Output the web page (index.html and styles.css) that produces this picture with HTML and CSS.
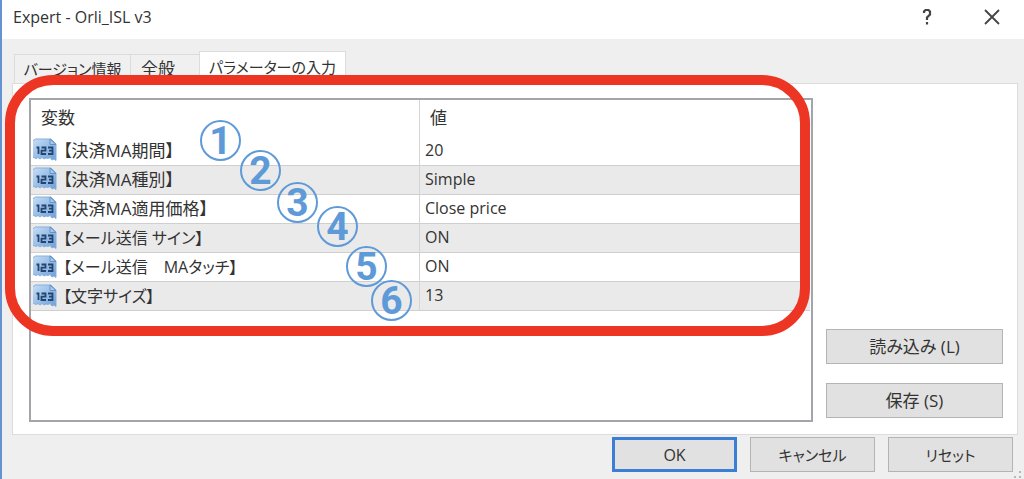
FILE: index.html
```html
<!DOCTYPE html>
<html lang="ja">
<head>
    <meta charset="UTF-8">
    <meta name="viewport" content="width=device-width, initial-scale=1.0">
    <title>Expert - Orli_ISL v3</title>
    <link rel="stylesheet" href="styles.css">
</head>
<body>
    <!-- shared icon for numeric parameters -->
    <svg class="defs" width="0" height="0" aria-hidden="true">
        <defs>
            <linearGradient id="paper" x1="0" y1="0" x2="1" y2="1">
                <stop offset="0" stop-color="#c6def6"/>
                <stop offset="1" stop-color="#6d9fd8"/>
            </linearGradient>
            <symbol id="icon-num" viewBox="0 0 24 24">
                <path d="M2.5 1H18l5 5V22.500l-2-1.500-2 1-2-2.500-2 1-2-.5-2 1-2-1.500-2 1.500-2-1.500-2 1-2-1-1.500.5V3z" fill="url(#paper)" stroke="#86afdd"/>
                <path d="M17 1v5.500h6z" fill="#a9c9ec" stroke="#6592c6"/>
                <path d="M3.500 9.500h2v6.500M8.500 9.500h4v3.200h-4v3.300h4.500M15 9.500h4.500v6.500H15M16 12.700h3.500" fill="none" stroke="#234570" stroke-width="1.800"/>
            </symbol>
        </defs>
    </svg>

    <div class="dialog">
        <header class="titlebar">
            <h1>Expert - Orli_ISL v3</h1>
            <button class="help" type="button" aria-label="ヘルプ">
                <svg width="12" height="18" viewBox="0 0 12 18"><path d="M3 5V3.500L4.500 2h3L9 3.500V6.500L6 9.500V12M6 14v2.500" fill="none" stroke="#444" stroke-width="2.200"/></svg>
            </button>
            <button class="close" type="button" aria-label="閉じる">
                <svg width="18" height="18" viewBox="0 0 18 18"><path d="M2 2l14 14M16 2L2 16" fill="none" stroke="#444" stroke-width="1.800"/></svg>
            </button>
        </header>

        <div class="tabs" role="tablist">
            <button class="tab" type="button" role="tab">バージョン情報</button>
            <button class="tab general" type="button" role="tab">全般</button>
            <button class="tab active" type="button" role="tab" aria-selected="true">パラメーターの入力</button>
        </div>

        <main class="panel">
            <div class="list">
                <table>
                    <thead>
                        <tr><th class="name">変数</th><th>値</th></tr>
                    </thead>
                    <tbody>
                        <tr><td class="name"><svg class="icon"><use href="#icon-num"/></svg>【決済MA期間】</td><td>20</td></tr>
                        <tr><td class="name"><svg class="icon"><use href="#icon-num"/></svg>【決済MA種別】</td><td>Simple</td></tr>
                        <tr><td class="name"><svg class="icon"><use href="#icon-num"/></svg>【決済MA適用価格】</td><td>Close price</td></tr>
                        <tr><td class="name kana"><svg class="icon"><use href="#icon-num"/></svg>【メール送信 サイン】</td><td>ON</td></tr>
                        <tr><td class="name kana"><svg class="icon"><use href="#icon-num"/></svg>【メール送信　MAタッチ】</td><td>ON</td></tr>
                        <tr><td class="name kana"><svg class="icon"><use href="#icon-num"/></svg>【文字サイズ】</td><td>13</td></tr>
                    </tbody>
                </table>
                <div class="frame"></div>
                <span class="mark m1">1</span>
                <span class="mark m2">2</span>
                <span class="mark m3">3</span>
                <span class="mark m4">4</span>
                <span class="mark m5">5</span>
                <span class="mark m6">6</span>
            </div>
            <div class="side">
                <button class="btn" type="button">読み込み (L)</button>
                <button class="btn" type="button">保存 (S)</button>
            </div>
        </main>

        <footer class="actions">
            <button class="btn primary" type="button">OK</button>
            <button class="btn kana" type="button">キャンセル</button>
            <button class="btn kana" type="button">リセット</button>
            <svg class="grip" width="8" height="8" viewBox="0 0 8 8"><path d="M5 0h2v2H5zM0 5h2v2H0zM5 5h2v2H5z" fill="#b8b8b8"/></svg>
        </footer>
    </div>
</body>
</html>
```

FILE: styles.css
```css
* {
    box-sizing: border-box;
}
body {
    margin: 0;
    background: #efefef;
    color: #333;
    font-family: "Open Sans", "Noto Sans CJK JP", sans-serif;
    font-size: 16px;
    line-height: 24px;
    font-feature-settings: "palt";
}
button {
    font: inherit;
    font-feature-settings: inherit;
    color: inherit;
    padding: 0;
    white-space: nowrap;
}
.defs {
    position: absolute;
}
.dialog {
    min-height: 100vh;
    display: flex;
    flex-direction: column;
    border-left: 2px solid #6592d0;
}

/* title bar */
.titlebar {
    display: flex;
    align-items: center;
    height: 39px;
    padding: 0 23px 6px 11px;
    background: #fff;
}
.titlebar h1 {
    flex: 1;
    margin: 0;
    font-size: 16px;
    font-weight: 400;
}
.titlebar button {
    display: flex;
    border: none;
    background: none;
}
.titlebar .help {
    margin-right: 50px;
}

/* tabs */
.tabs {
    display: flex;
    align-items: flex-end;
    height: 44px;
    padding-left: 12px;
}
.tab {
    height: 29px;
    width: 117px;
    border: 1px solid #dcdcdc;
    border-bottom: none;
    background: #f0f0f0;
    font-size: 15px;
}
.tab.general {
    width: 68px;
    border-left: none;
    border-right: none;
    padding-right: 14px;
    font-size: 17px;
}
.tab.active {
    position: relative;
    height: 33px;
    width: 147px;
    padding-bottom: 2px;
    margin-bottom: -1px;
    background: #fff;
    z-index: 1;
}

/* parameter list */
.panel {
    flex: 1;
    display: flex;
    gap: 13px;
    margin: 0 6px 0 10px;
    padding: 14px 14px 12px 16px;
    border: 1px solid #dcdcdc;
    background: #fff;
}
.list {
    flex: 1;
    position: relative;
    z-index: 2;
    border: 2px solid #a3a5ab;
    padding-right: 1px;
}
table {
    width: 100%;
    border-collapse: separate;
    border-spacing: 0;
    table-layout: fixed;
}
th {
    height: 37px;
    padding: 0 10px 2px;
    text-align: left;
    font-size: 17px;
    font-weight: 400;
}
th.name {
    width: 389px;
}
td {
    height: 29px;
    padding: 0 5px 2px;
    border-bottom: 1px solid #cfcfcf;
    white-space: nowrap;
}
.name {
    border-right: 1px solid #d4d4d4;
}
td.name {
    padding: 0 2px;
    font-size: 17px;
}
td.kana {
    font-size: 16px;
}
tbody tr:nth-child(even) {
    background: #eaeaea;
}
.icon {
    width: 24px;
    height: 24px;
    margin: -4px 6px 0 0;
    vertical-align: middle;
}

/* red frame and numbers drawn over the list */
.frame {
    position: absolute;
    top: -25px;
    left: -26px;
    right: 1px;
    height: 261px;
    border: 10px solid #ec3523;
    border-radius: 48px;
}
.mark {
    position: absolute;
    width: 41px;
    height: 41px;
    border: 2px solid #5e9ad8;
    border-radius: 50%;
    color: #5e9ad8;
    font-family: Roboto, sans-serif;
    font-size: 39px;
    font-weight: 700;
    line-height: 39px;
    text-align: center;
}
.m1 { left: 169px; top: 20px; }
.m2 { left: 209px; top: 50px; }
.m3 { left: 246px; top: 82px; }
.m4 { left: 286px; top: 106px; }
.m5 { left: 315px; top: 146px; }
.m6 { left: 340px; top: 180px; }

/* buttons */
.btn {
    height: 35px;
    border: 1px solid #b4b4b4;
    background: #e1e1e1;
}
.btn.kana {
    font-size: 15px;
}
.side {
    display: flex;
    flex-direction: column;
    justify-content: flex-end;
    gap: 19px;
    width: 177px;
    padding-bottom: 4px;
}
.side .btn {
    font-size: 17px;
}
.actions {
    display: flex;
    justify-content: flex-end;
    gap: 13px;
    position: relative;
    padding: 2px 11px 7px;
}
.actions .btn {
    width: 125px;
}
.btn.primary {
    border: 3px solid #3a7fd5;
}
.grip {
    position: absolute;
    right: 2px;
    bottom: 0;
}
```
